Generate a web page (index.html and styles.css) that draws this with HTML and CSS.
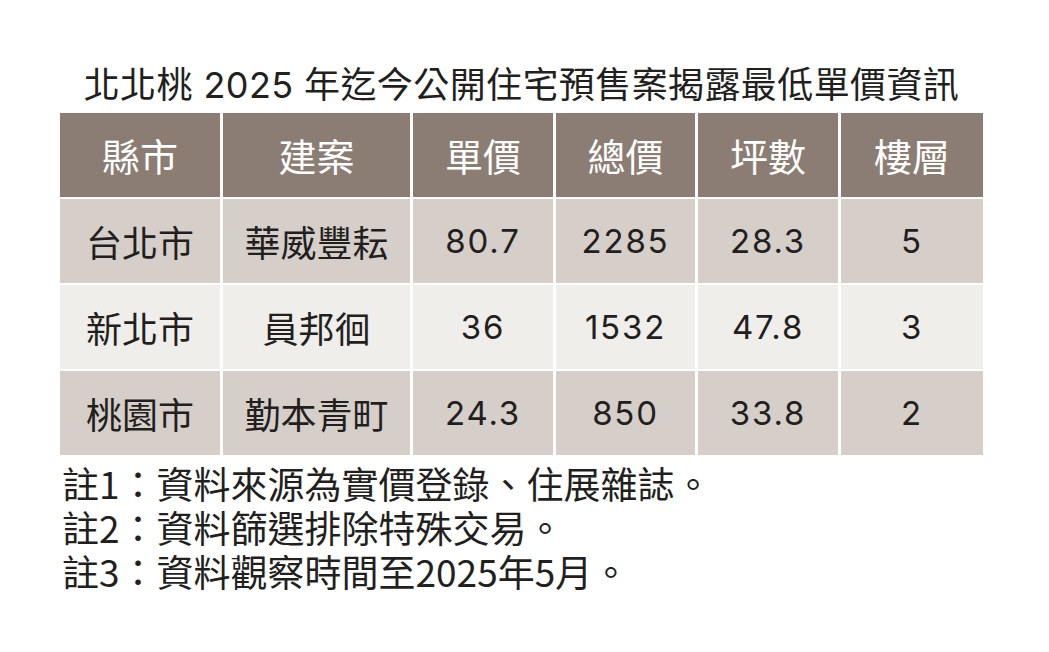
FILE: index.html
```html
<!DOCTYPE html>
<html lang="zh-Hant">
<head>
<meta charset="utf-8">
<title>北北桃 2025 年迄今公開住宅預售案揭露最低單價資訊</title>
<link rel="stylesheet" href="styles.css">
</head>
<body>
<div class="page">
  <h1 class="title">北北桃 2025 年迄今公開住宅預售案揭露最低單價資訊</h1>
  <div class="table">
    <div class="cell head">縣市</div>
    <div class="cell head">建案</div>
    <div class="cell head">單價</div>
    <div class="cell head">總價</div>
    <div class="cell head">坪數</div>
    <div class="cell head">樓層</div>

    <div class="cell odd">台北市</div>
    <div class="cell odd">華威豐耘</div>
    <div class="cell odd num">80.7</div>
    <div class="cell odd num">2285</div>
    <div class="cell odd num">28.3</div>
    <div class="cell odd num">5</div>

    <div class="cell even">新北市</div>
    <div class="cell even">員邦徊</div>
    <div class="cell even num">36</div>
    <div class="cell even num">1532</div>
    <div class="cell even num">47.8</div>
    <div class="cell even num">3</div>

    <div class="cell odd">桃園市</div>
    <div class="cell odd">勤本青町</div>
    <div class="cell odd num">24.3</div>
    <div class="cell odd num">850</div>
    <div class="cell odd num">33.8</div>
    <div class="cell odd num">2</div>
  </div>
  <div class="notes">
    <p>註1：資料來源為實價登錄、住展雜誌。</p>
    <p>註2：資料篩選排除特殊交易。</p>
    <p>註3：資料觀察時間至2025年5月。</p>
  </div>
</div>
</body>
</html>
```

FILE: styles.css
```css
html, body {
  margin: 0;
  padding: 0;
  background: #ffffff;
}

body {
  font-family: "Noto Sans CJK TC", "Noto Sans", sans-serif;
  color: #231f1e;
}

.page {
  width: 923px;
  margin-left: 60px;
  padding-top: 63px;
}

.title {
  margin: 0 0 6px 0;
  height: 44px;
  line-height: 44px;
  font-size: 36px;
  font-weight: 400;
  text-align: center;
  font-family: "Inter", "Noto Sans CJK TC", sans-serif;
  color: #231f1e;
  letter-spacing: 0.4px;
}

.table {
  display: grid;
  grid-template-columns: 160px 187px 140px 139px 140px 142px;
  grid-auto-rows: 84px;
  column-gap: 3px;
  row-gap: 2px;
}

.cell {
  display: flex;
  align-items: center;
  justify-content: center;
  font-size: 36px;
  line-height: 1;
}

.head {
  background: #8b7d73;
  color: #ffffff;
  font-size: 38px;
}

.odd {
  background: #d5cec9;
}

.even {
  background: #efeeea;
}

.num {
  font-family: "Inter", "Noto Sans CJK TC", sans-serif;
  font-size: 33px;
  letter-spacing: 1.8px;
}

.notes {
  margin-top: 6px;
  padding-left: 2px;
}

.notes p {
  margin: 0;
  font-size: 37px;
  line-height: 44px;
  color: #231f1e;
}
```
